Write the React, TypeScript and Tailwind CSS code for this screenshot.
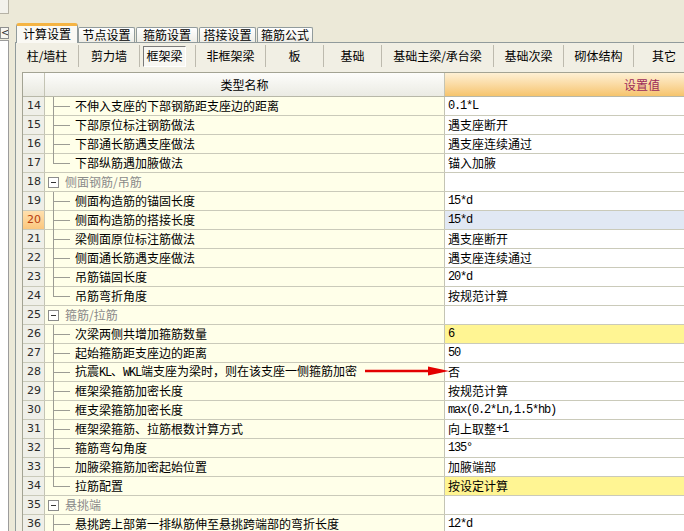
import React from 'react';

type Row = { n: number; t: string; v?: string; k: 'c' | 'l' | 'g'; hl?: 'y' | 's' };

const ROWS: Row[] = [
  { n: 14, t: '不伸入支座的下部钢筋距支座边的距离', v: '0.1*L', k: 'c' },
  { n: 15, t: '下部原位标注钢筋做法', v: '遇支座断开', k: 'c' },
  { n: 16, t: '下部通长筋遇支座做法', v: '遇支座连续通过', k: 'c' },
  { n: 17, t: '下部纵筋遇加腋做法', v: '锚入加腋', k: 'l' },
  { n: 18, t: '侧面钢筋/吊筋', k: 'g' },
  { n: 19, t: '侧面构造筋的锚固长度', v: '15*d', k: 'c' },
  { n: 20, t: '侧面构造筋的搭接长度', v: '15*d', k: 'c', hl: 's' },
  { n: 21, t: '梁侧面原位标注筋做法', v: '遇支座断开', k: 'c' },
  { n: 22, t: '侧面通长筋遇支座做法', v: '遇支座连续通过', k: 'c' },
  { n: 23, t: '吊筋锚固长度', v: '20*d', k: 'c' },
  { n: 24, t: '吊筋弯折角度', v: '按规范计算', k: 'l' },
  { n: 25, t: '箍筋/拉筋', k: 'g' },
  { n: 26, t: '次梁两侧共增加箍筋数量', v: '6', k: 'c', hl: 'y' },
  { n: 27, t: '起始箍筋距支座边的距离', v: '50', k: 'c' },
  { n: 28, t: '抗震KL、WKL端支座为梁时，则在该支座一侧箍筋加密', v: '否', k: 'c' },
  { n: 29, t: '框架梁箍筋加密长度', v: '按规范计算', k: 'c' },
  { n: 30, t: '框支梁箍筋加密长度', v: 'max(0.2*Ln,1.5*hb)', k: 'c' },
  { n: 31, t: '框架梁箍筋、拉筋根数计算方式', v: '向上取整+1', k: 'c' },
  { n: 32, t: '箍筋弯勾角度', v: '135°', k: 'c' },
  { n: 33, t: '加腋梁箍筋加密起始位置', v: '加腋端部', k: 'c' },
  { n: 34, t: '拉筋配置', v: '按设定计算', k: 'l', hl: 'y' },
  { n: 35, t: '悬挑端', k: 'g' },
  { n: 36, t: '悬挑跨上部第一排纵筋伸至悬挑跨端部的弯折长度', v: '12*d', k: 'c' },
];

const SUBTABS = [
  { label: '柱/墙柱', w: 'w-[62px]' },
  { label: '剪力墙', w: 'w-[60px]' },
  { label: '框架梁', w: 'w-[55px]', on: true },
  { label: '非框架梁', w: 'w-[69px]' },
  { label: '板', w: 'w-[57px]' },
  { label: '基础', w: 'w-[57px]' },
  { label: '基础主梁/承台梁', w: 'w-[111px]' },
  { label: '基础次梁', w: 'w-[69px]' },
  { label: '砌体结构', w: 'w-[69px]' },
  { label: '其它', w: 'w-[60px]' },
];

const TABS = [
  { label: '节点设置', w: 'w-[57px]', ml: 'ml-0' },
  { label: '箍筋设置', w: 'w-[62px]', ml: 'ml-[1px]' },
  { label: '搭接设置', w: 'w-[57px]', ml: 'ml-[1px]' },
  { label: '箍筋公式', w: 'w-[56px]', ml: 'ml-[1px]' },
];

// latin runs get the narrow half-width look of the original font
function Mixed({ text }: { text: string }) {
  const parts = text.split(/([\x20-\x7E°]+)/).filter(Boolean);
  return (
    <>
      {parts.map((p, i) =>
        /^[\x20-\x7E°]+$/.test(p) ? (
          <span key={i} className="font-['Liberation_Mono',monospace] text-[12px] tracking-[-1.2px]">
            {p}
          </span>
        ) : (
          <span key={i}>{p}</span>
        )
      )}
    </>
  );
}

function Connector({ last }: { last: boolean }) {
  return (
    <svg width="30" height="18" className="shrink-0 overflow-visible">
      <line x1="8.5" y1="0" x2="8.5" y2={last ? 9.5 : 19} stroke="#9C9C94" strokeWidth="1" />
      <line x1="8" y1="9.5" x2="25" y2="9.5" stroke="#9C9C94" strokeWidth="1" />
    </svg>
  );
}

function GroupBox() {
  return (
    <div className="ml-[3px] mr-[6px] w-[11px] h-[11px] shrink-0 border border-[#8C8C8C] bg-white flex items-center justify-center">
      <div className="w-[5px] h-px bg-[#333]" />
    </div>
  );
}

export default function App() {
  return (
    <div className="w-[684px] h-[531px] overflow-hidden bg-[#ECE9D8] flex font-['Noto_Sans_CJK_SC',sans-serif] text-[12px] text-black">
      {/* left dock strip */}
      <div className="w-[9px] shrink-0 flex flex-col">
        <div className="h-[14px] bg-[#F3F2EC] border-r border-b border-[#B5B2A5]" />
        <div className="h-[13px]" />
        <div className="h-[12px] border border-[#8E8F8F] bg-[#F7F6F1] text-[10px] leading-none flex items-center overflow-hidden font-['DejaVu_Sans',sans-serif] text-[#333]">
          &lt;
        </div>
        <div className="h-px" />
        <div className="flex-1 bg-white border-t border-r border-[#9C9C9C]" />
      </div>

      <div className="ml-[6px] flex-1 min-w-0 pt-[23px] flex flex-col overflow-hidden">
        {/* tabs */}
        <div className="h-[20px] flex items-end relative z-10 pl-px shrink-0">
          <div className="h-[20px] w-[62px] shrink-0 flex items-center justify-center pb-[2px] bg-[#FAF9F4] border-x border-[#919B9C] border-t-[3px] border-t-[#F5B443] rounded-t-[3px]">
            计算设置
          </div>
          {TABS.map((t) => (
            <div
              key={t.label}
              className={`${t.w} ${t.ml} mb-px h-[15px] shrink-0 flex items-center justify-center border border-b-0 border-[#919B9C] rounded-t-[2px] bg-linear-to-b from-white to-[#EEEDE6]`}
            >
              {t.label}
            </div>
          ))}
        </div>

        {/* panel */}
        <div className="-mt-px flex-1 border-t border-l border-[#919B9C] bg-[#F1EFE4] flex flex-col">
          <div className="h-[26px] flex items-center shrink-0">
            {SUBTABS.map((s, i) => (
              <React.Fragment key={s.label}>
                {s.on ? (
                  <div className={`${s.w} shrink-0 h-full flex items-center`}>
                    <div className="ml-[3px] w-[43px] h-[21px] flex items-center justify-center border border-t-[#7A7A7A] border-l-[#7A7A7A] border-r-white border-b-white bg-[#F8F7F2]">
                      {s.label}
                    </div>
                  </div>
                ) : (
                  <div className={`${s.w} shrink-0 h-full flex items-center justify-center`}>{s.label}</div>
                )}
                {i < SUBTABS.length - 1 && <div className="w-px h-[22px] shrink-0 bg-[#BDBAAE]" />}
              </React.Fragment>
            ))}
          </div>

          {/* grid */}
          <div className="mt-[3px] ml-[6px] w-[818px] shrink-0 border-t border-l border-[#A3A393] bg-white">
            <div className="flex h-[24px] border-b border-[#B8B8A8]">
              <div className="w-[22px] shrink-0 border-r border-[#C4C4B4] bg-linear-to-b from-[#FBFBF8] to-[#E8E8DF]" />
              <div className="w-[400px] shrink-0 border-r border-[#C4C4B4] flex items-center justify-center bg-linear-to-b from-[#FDFDFB] to-[#EBEBE3]">
                类型名称
              </div>
              <div className="w-[394px] shrink-0 flex items-center justify-center bg-linear-to-b from-[#FEF0D4] to-[#F6C46C] text-[#9C2A5A]">
                设置值
              </div>
            </div>

            {ROWS.map((r) => (
              <div key={r.n} className="relative flex h-[19px] border-b border-[#CACABA]">
                <div
                  className={`w-[22px] shrink-0 border-r border-[#C4C4B4] pl-[4px] flex items-center font-['DejaVu_Sans',sans-serif] text-[11px] ${
                    r.hl === 's'
                      ? 'bg-linear-to-b from-[#FFE0AE] to-[#FBC77E] text-[#B8400E]'
                      : 'bg-[#EFEFE8] text-[#2A2A2A]'
                  }`}
                >
                  {r.n}
                </div>
                <div className="w-[400px] shrink-0 border-r border-[#C4C4B4] bg-[#FFFFE9] flex items-center leading-[18px] whitespace-nowrap">
                  {r.k === 'g' ? (
                    <>
                      <GroupBox />
                      <span className="text-[#8A8A8A]">{r.t}</span>
                    </>
                  ) : (
                    <>
                      <Connector last={r.k === 'l'} />
                      <span>
                        <Mixed text={r.t} />
                      </span>
                    </>
                  )}
                </div>
                <div
                  className={`w-[394px] shrink-0 pl-[3px] flex items-center leading-[18px] whitespace-nowrap ${
                    r.hl === 'y' ? 'bg-[#FFF593]' : r.hl === 's' ? 'bg-[#E1E8F4]' : 'bg-white'
                  }`}
                >
                  {r.v && <Mixed text={r.v} />}
                </div>
                {r.n === 28 && (
                  <svg
                    className="absolute left-[342px] top-[2px] pointer-events-none"
                    width="84"
                    height="12"
                    viewBox="0 0 84 12"
                  >
                    <line x1="0" y1="6" x2="66" y2="6" stroke="#E30000" strokeWidth="2.5" />
                    <polygon points="63,1.5 84,6 63,10.5" fill="#E30000" />
                  </svg>
                )}
              </div>
            ))}
          </div>
        </div>
      </div>
    </div>
  );
}
